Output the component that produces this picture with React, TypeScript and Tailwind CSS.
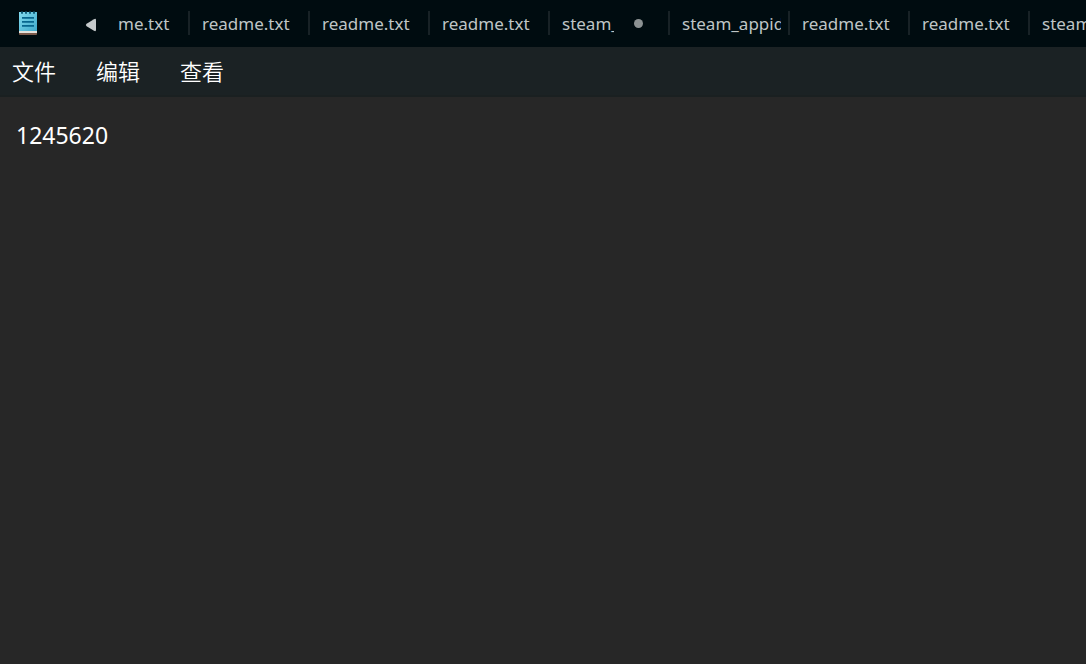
import { useState } from "react";

type Tab = { label: string; unsaved?: boolean };

const tabs: Tab[] = [
  { label: "readme.txt" },
  { label: "readme.txt" },
  { label: "readme.txt" },
  { label: "steam_", unsaved: true },
  { label: "steam_appid" },
  { label: "readme.txt" },
  { label: "readme.txt" },
  { label: "steam" },
];

const menus = ["文件", "编辑", "查看"];

function NotepadIcon() {
  return (
    <svg className="h-6 w-[18px] shrink-0" viewBox="0 0 18 24" aria-hidden="true">
      <defs>
        <linearGradient id="sheet" x1="0" y1="0" x2="1" y2="1">
          <stop offset="0" stopColor="#83dcef" />
          <stop offset="1" stopColor="#3fa9cb" />
        </linearGradient>
      </defs>
      <path d="M0 21h18v2a1 1 0 0 1-1 1H1a1 1 0 0 1-1-1z" fill="#7c5a4b" />
      <path d="M0 20h18v2H0z" fill="#e4e2dc" />
      <path d="M0 1h18v19H0z" fill="url(#sheet)" />
      <path d="M2 0.500h2v2.200H2zM6 0.500h2v2.200H6zM10 0.500h2v2.200h-2zM14 0.500h2v2.200h-2z" fill="#125f7c" />
      <path d="M3 6h12v1.700H3zM3 10h12v1.700H3zM3 14h12v1.700H3z" fill="#08678f" />
    </svg>
  );
}

function FileTab({ label, unsaved }: Tab) {
  return (
    <button
      type="button"
      role="tab"
      aria-selected={!!unsaved}
      className="flex h-6 w-[120px] shrink-0 items-center border-l-2 border-[#182226] pl-3"
    >
      <span
        className={
          unsaved ? "w-[52px] overflow-hidden pt-0.5 text-left" : "w-[99px] overflow-hidden pt-0.5 text-left"
        }
      >
        {label}
      </span>
      {unsaved && <span className="ml-5 size-[9px] rounded-full bg-[#8c9293]" />}
    </button>
  );
}

export default function App() {
  const [text, setText] = useState("1245620");
  return (
    <div className="flex min-h-screen flex-col bg-[#272727] font-['Noto_Sans','Noto_Sans_CJK_SC',sans-serif]">
      <header className="flex h-[47px] items-center overflow-hidden bg-[#000c10] pb-px pl-[19px] text-[17px] leading-6 whitespace-nowrap text-[#bfc5c6]">
        <NotepadIcon />
        <button type="button" aria-label="向左滚动" className="ml-12 shrink-0">
          <svg className="mt-1 h-3.5 w-3" viewBox="0 0 12 14" aria-hidden="true">
            <path d="M9 1.2Q11 0 11 2.2v9.6q0 2.200-2 1L1.600 8.300Q0 7 1.600 5.700z" fill="#c5cacb" />
          </svg>
        </button>
        <div role="tablist" className="flex min-w-0 flex-1 items-center overflow-hidden">
          <button type="button" role="tab" aria-selected="false" className="w-[91px] shrink-0 pt-0.5 pl-[21px] text-left">
            me.txt
          </button>
          {tabs.map((tab, i) => (
            <FileTab key={i} {...tab} />
          ))}
        </div>
      </header>
      <nav className="flex h-[50px] items-center gap-10 border-b-2 border-[#1a2021] bg-[#1b2224] pl-3 text-[22px] leading-8 text-white">
        {menus.map((menu) => (
          <button key={menu} type="button" className="font-[350]">
            {menu}
          </button>
        ))}
      </nav>
      <textarea
        aria-label="文本编辑器"
        spellCheck={false}
        value={text}
        onChange={(e) => setText(e.target.value)}
        className="flex-1 resize-none bg-transparent px-4 pt-[22px] text-[23px] leading-8 text-white outline-none"
      />
    </div>
  );
}
